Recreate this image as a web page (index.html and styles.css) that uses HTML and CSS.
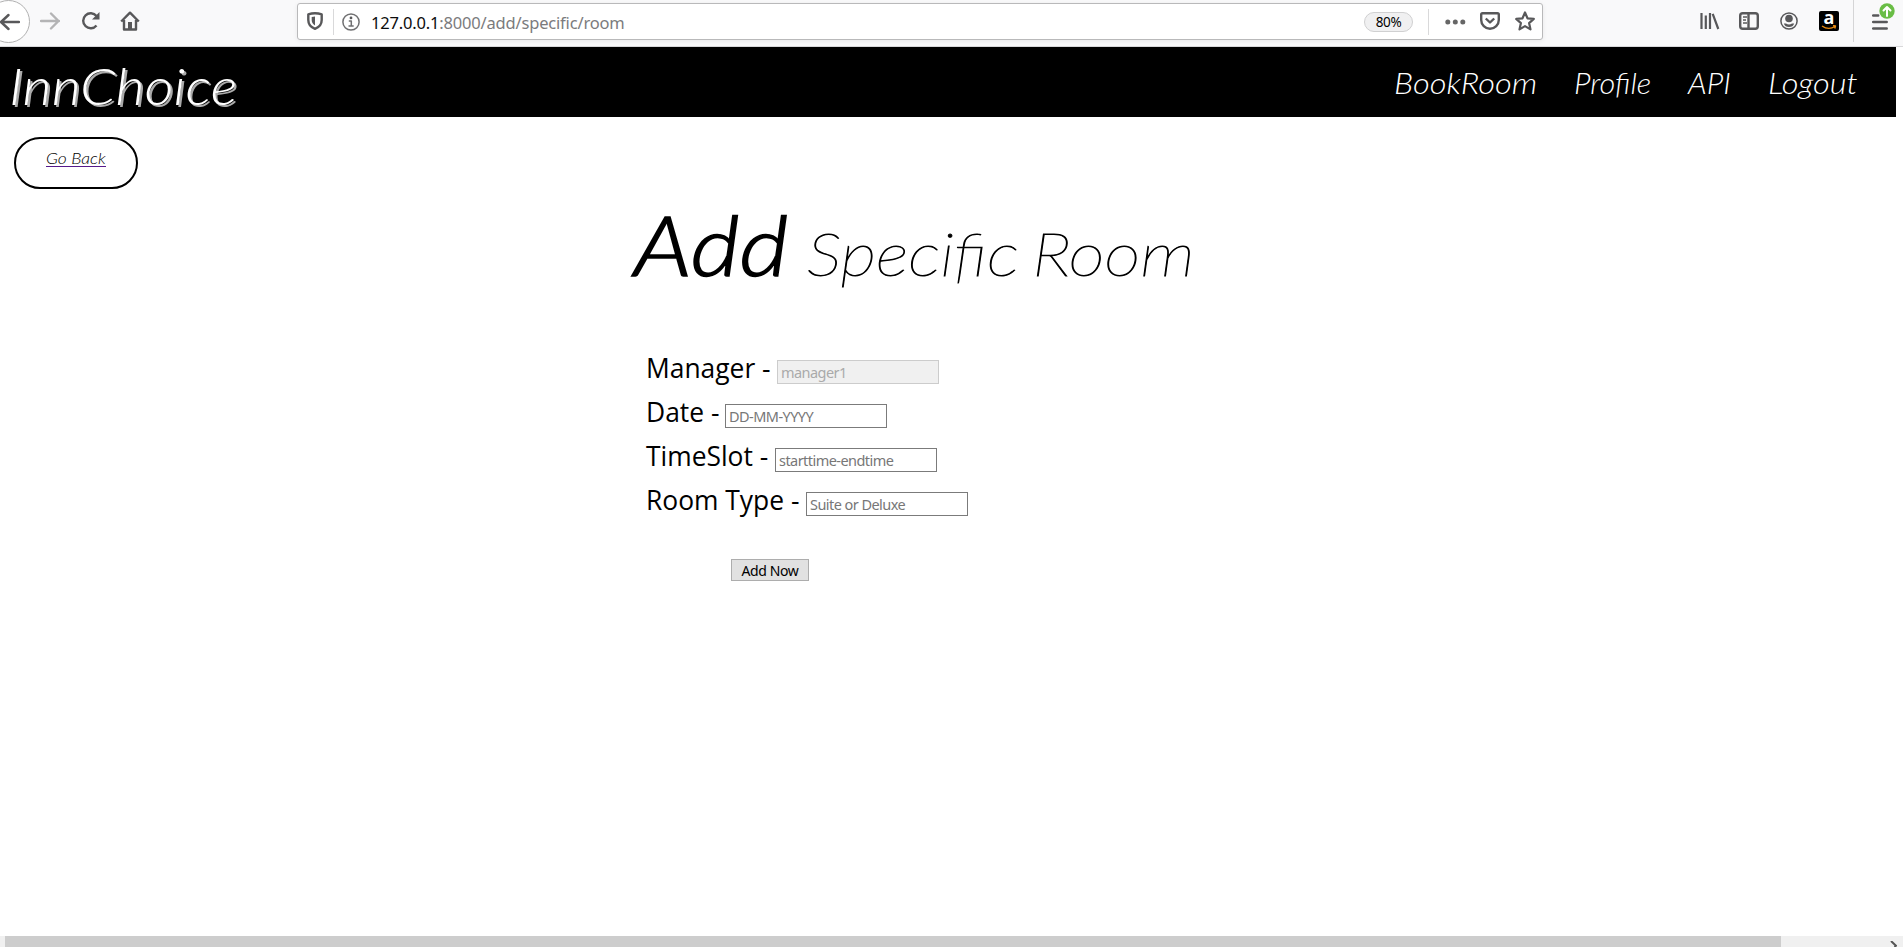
FILE: index.html
```html
<!DOCTYPE html>
<html lang="en">
<head>
<meta charset="utf-8">
<title>Add Specific Room</title>
<link rel="stylesheet" href="styles.css">
</head>
<body>
<div class="toolbar">
  <div class="back-circle"><svg width="22" height="20" viewBox="0 0 22 20"><path d="M21 10H3M10.500 3L3 10l7.500 7" /></svg></div>
  <svg class="ic forward" width="20" height="18" viewBox="0 0 20 18"><path d="M1 9h18M11 1.500L18.500 9 11 16.500"/></svg>
  <svg class="ic reload" width="20" height="20" viewBox="0 0 20 20"><path d="M15.500 14.500A7.500 7.500 0 1 1 15.500 5"/><path class="fill" d="M18.500 1v7.500H11z"/></svg>
  <svg class="ic home" width="20" height="20" viewBox="0 0 20 20"><path d="M1.200 10.500L10 1.700l8.800 8.800M4 9v9.500h12V9"/><path class="fill" d="M8 11h4v8H8z"/></svg>
  <div class="urlbar">
    <svg class="shield" width="16" height="18" viewBox="0 0 16 18"><path d="M8 1.200c2.300 0 4.500.4 6.700 1.200V8c0 4.500-3 7.400-6.700 8.800C4.300 15.400 1.300 12.500 1.300 8V2.400C3.500 1.600 5.700 1.200 8 1.200z"/><path class="fill" d="M8 4.500v9C5.500 12 4.700 10 4.700 8V5C5.700 4.700 7 4.500 8 4.500z"/></svg>
    <i class="sep"></i>
    <svg class="info" width="18" height="18" viewBox="0 0 18 18"><circle cx="9" cy="9" r="8.100"/><path d="M6.800 8H9.300v5M6.500 13h5.200"/><circle class="fill dot" cx="9" cy="4.900" r="1.400"/></svg>
    <div class="url"><b>127.0.0.1</b>:8000/add/specific/room</div>
    <div class="zoom">80%</div>
    <i class="sep right"></i>
    <svg class="dots" width="21" height="6" viewBox="0 0 21 6"><circle cx="2.800" cy="3" r="2.500"/><circle cx="10.300" cy="3" r="2.500"/><circle cx="17.800" cy="3" r="2.500"/></svg>
    <svg class="pocket" width="20" height="18" viewBox="0 0 20 18"><path d="M2.500 1.300h15q1.300 0 1.300 1.300V8a8.800 8.800 0 0 1-17.600 0V2.600q0-1.300 1.300-1.300z"/><path d="M5.800 6.500L10 10.500l4.200-4"/></svg>
    <svg class="star" width="20" height="20" viewBox="0 0 20 20"><path d="M10 1.500l2.500 5.800 6.300.6-4.700 4.200 1.400 6.300L10 15.100l-5.500 3.300 1.400-6.300L1.200 7.900l6.300-.6z"/></svg>
  </div>
  <svg class="ic library" width="20" height="18" viewBox="0 0 20 18"><path d="M1.500 1v16M5.800 3.500V17M10 1v16M12.700 1.800L18.300 17"/></svg>
  <svg class="ic sidebar" width="20" height="18" viewBox="0 0 20 18"><rect x="1.200" y="1.300" width="17.600" height="15.400" rx="2.500"/><path d="M9.500 1v16"/><path class="thin" d="M4 5h4M4 8h3M4 11h4"/></svg>
  <svg class="ic account" width="18" height="18" viewBox="0 0 18 18"><circle cx="9" cy="9" r="8.100"/><circle class="fill" cx="9" cy="6.500" r="3.800"/><path class="fill" d="M3.800 11.500h2.200q3 2 6 0h2.200Q13 15 9 15t-5.200-3.500z"/></svg>
  <div class="amazon"><span>a</span><svg width="16" height="5" viewBox="0 0 16 5"><path d="M1 1q6.500 4.500 13 .5M12 .5l2.500.5-.7 2.500"/></svg></div>
  <i class="menu-line"></i>
  <div class="menu"><svg width="16" height="16" viewBox="0 0 16 16"><path d="M1.200 1.500h5M1.200 8h13.500M1.200 14.500h13.500"/></svg>
    <svg class="badge" width="16" height="16" viewBox="0 0 16 16"><circle cx="8" cy="8" r="7.700"/><path d="M8 13V4M4.500 7.500L8 4l3.500 3.500"/></svg></div>
</div>

<header class="header">
  <div class="logo">InnChoice</div>
  <nav class="nav"><a class="n1">BookRoom</a><a class="n2">Profile</a><a class="n3">API</a><a class="n4">Logout</a></nav>
</header>
<main class="page">
  <a class="goback"><span class="link"><span class="wide">Go Back</span></span></a>
  <h1 class="title"><span class="add">Add</span><span class="rest">Specific Room</span></h1>
  <form class="form">
    <div class="row"><label class="l1">Manager -</label><input class="m" value="manager1" disabled></div>
    <div class="row"><label class="l2">Date -</label><input class="d" placeholder="DD-MM-YYYY"></div>
    <div class="row"><label class="l3">TimeSlot -</label><input class="t" placeholder="starttime-endtime"></div>
    <div class="row"><label class="l4">Room Type -</label><input class="r" placeholder="Suite or Deluxe"></div>
    <button type="button">Add Now</button>
  </form>
</main>
<div class="scroll"><div class="thumb"></div><svg width="8" height="6" viewBox="0 0 8 6"><path d="M1 0l5 4.700L4.500 6"/></svg></div>
</body>
</html>
```
FILE: styles.css
```css
* { box-sizing: border-box; }
body { margin: 0; height: 947px; overflow: hidden; background: #fff; color: #000; display: flex; flex-direction: column; font-family: "Open Sans", sans-serif; }
svg { display: block; flex: none; fill: none; stroke: #58585a; stroke-width: 2.4; stroke-linejoin: round; }
svg .fill { fill: #58585a; stroke: none; }
.toolbar { height: 47px; flex: none; background: #f9f9fa; border-bottom: 1px solid #d8d8da; display: flex; align-items: flex-start; }
.back-circle { width: 43px; height: 43px; flex: none; margin-left: -13px; border: 1px solid #b1b1b1; border-radius: 50%; background: #fff; padding: 11px 0 0 10px; }
.back-circle svg { stroke-linecap: round; }
.ic { margin-top: 12px; }
.forward { margin-left: 10px; stroke: #b4b4b5; stroke-linecap: round; }
.reload { margin-left: 21px; margin-top: 11px; }
.home { margin-left: 19px; margin-top: 11px; }
.urlbar { margin: 3px 0 0 157px; width: 1246px; height: 37px; flex: none; background: #fff; border: 1px solid #b9b9ba; border-radius: 3px; display: flex; align-items: center; box-shadow: 0 1px 5px #00000012; }
.shield { margin-left: 9px; margin-top: -1px; }
.sep { width: 1px; height: 26px; background: #d9d9da; margin-left: 10px; flex: none; }
.info { margin-left: 8px; stroke-width: 1.500; stroke: #707072; }
.url { margin-left: 11px; width: 993px; padding-top: 2px; font-family: "Noto Sans", sans-serif; font-size: 16.500px; color: #7b7b7d; line-height: 24px; letter-spacing: -.18px; white-space: nowrap; }
.url b { font-weight: 400; color: #0c0c0d; }
.zoom { width: 49px; height: 20px; flex: none; background: #f0f0f1; border: 1px solid #d0d0d1; border-radius: 10px; text-align: center; font: 13.500px/18px "Noto Sans", sans-serif; letter-spacing: -.4px; }
.right { margin-left: 15px; }
.dots { margin-left: 16px; fill: #666; stroke: none; }
.pocket { margin-left: 14px; margin-top: -2px; }
.star { margin-left: 15px; margin-top: -2px; stroke-width: 2.200; }
.library { margin-left: 157px; stroke-width: 2.2; }
.sidebar { margin-left: 19px; }
.sidebar .thin { stroke-width: 1.500; }
.account { margin-left: 21px; stroke-width: 1.500; }
.amazon { margin: 11px 0 0 21px; width: 20px; height: 20px; flex: none; background: #000; border-radius: 2px; color: #fff; display: flex; flex-direction: column; align-items: center; }
.amazon span { font: 700 18px/12px "Open Sans", sans-serif; height: 14px; }
.amazon svg { stroke: #e88b12; stroke-width: 1.400; }
.menu-line { width: 1px; height: 42px; margin-left: 14px; background: #d5d5d6; flex: none; }
.menu { position: relative; margin: 14px 0 0 18px; }
.menu > svg { stroke-linecap: round; stroke-width: 2.500; }
.menu .badge { position: absolute; left: 7px; top: -11px; fill: #69bd45; stroke: #fff; stroke-width: 2; }
.menu .badge circle { stroke: none; }

.header { height: 70px; width: 1896px; flex: none; background: #000; color: #fff; display: flex; font-family: Lato, sans-serif; font-style: italic; white-space: nowrap; }
.logo, .nav a, .wide, .add, .rest { transform-origin: 0 50%; }
.logo { margin-left: 9px; width: 1385px; padding-top: 3px; font-size: 52px; font-weight: 300; line-height: 70px; text-shadow: 2px 2px 0 #aaa; transform: scaleX(1.085); }
.nav { display: flex; padding-top: 1px; font-size: 29px; font-weight: 300; line-height: 70px; }
.nav a { flex: none; }
.n1 { width: 180px; transform: scaleX(1.125); }
.n2 { width: 114px; transform: scaleX(1.06); }
.n3 { width: 80px; transform: scaleX(1.06); }
.n4 { transform: scaleX(1.125); }
.page { flex: 1; display: flex; flex-direction: column; }
.goback { margin: 20px 0 0 14px; width: 124px; height: 52px; border: 2px solid #000; border-radius: 26px; padding: 8px 0 0 30px; font: italic 300 16px/22px Lato, sans-serif; white-space: nowrap; }
.link { border-bottom: 1px solid #551a8b; display: inline-block; width: 60px; line-height: 17px; }
.wide { display: inline-block; transform: scaleX(1.09); }
.title { margin: 0 0 0 634px; height: 110px; display: flex; align-items: baseline; font-family: Lato, sans-serif; font-style: italic; line-height: 110px; white-space: nowrap; }
.add { width: 173px; font-size: 82px; font-weight: 300; -webkit-text-stroke: 1.500px #000; transform: scaleX(1.155); }
.rest { font-size: 61px; font-weight: 100; word-spacing: -5px; -webkit-text-stroke: .9px #000; transform: scaleX(1.153); }
.form { margin: 54px 0 0 646px; display: flex; flex-direction: column; align-items: flex-start; }
.row { height: 44px; display: flex; align-items: flex-start; }
.row label { font-size: 26.400px; line-height: 31px; white-space: nowrap; flex: none; }
.l1 { width: 131px; }
.l2 { width: 79px; }
.l3 { width: 129px; }
.l4 { width: 160px; }
.row input { margin: 7px 0 0; width: 162px; height: 24px; border: 1px solid #7b7b7b; border-radius: 0; background: #fff; padding: 0 3px 1px; font: 14.500px/20px "Noto Sans", sans-serif; letter-spacing: -.55px; }
.row input::placeholder { color: #777; opacity: 1; }
.row input.m { background: #f0f0f0; border-color: #ccc; color: #aaa; }
.form button { margin: 30px 0 0 85px; width: 78px; height: 22px; border: 1px solid #adadad; border-radius: 0; background: #e1e1e1; color: #000; padding: 1px 0 0; font: 14px/19px "Noto Sans", sans-serif; letter-spacing: -.4px; }
.scroll { flex: none; height: 11px; background: #f0f0f0; display: flex; padding-left: 5px; }
.thumb { width: 1776px; background: #cdcdcd; }
.scroll svg { margin: 5px 0 0 109px; stroke: #555; stroke-width: 2; }
```
